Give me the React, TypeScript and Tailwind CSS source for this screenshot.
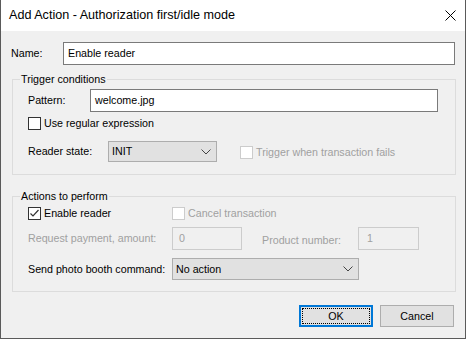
import React from 'react';

const font = { fontFamily: '"Liberation Sans", Arial, sans-serif' };

function Check({ checked, disabled }: { checked?: boolean; disabled?: boolean }) {
  return (
    <div
      className={`w-[13px] h-[13px] shrink-0 border bg-white flex items-center justify-center ${
        disabled ? 'border-[#cccccc]' : 'border-[#333333]'
      }`}
    >
      {checked && (
        <svg width="11" height="11" viewBox="0 0 11 11">
          <polyline points="1.5,5.5 4,8 9.5,2" fill="none" stroke="#333" strokeWidth="1.2" />
        </svg>
      )}
    </div>
  );
}

function Chevron() {
  return (
    <svg width="10" height="6" viewBox="0 0 10 6" className="shrink-0">
      <polyline points="0.5,0.5 5,5 9.5,0.5" fill="none" stroke="#444" strokeWidth="1" />
    </svg>
  );
}

function Combo({ value, w }: { value: string; w: string }) {
  return (
    <div className={`${w} h-full border border-[#adadad] bg-[#e1e1e1] flex items-center pl-[3px] pr-[5px]`}>
      <span className="flex-1 text-black">{value}</span>
      <Chevron />
    </div>
  );
}

function Group({ title, children }: { title: string; children: React.ReactNode }) {
  return (
    <div className="relative ml-[1px] w-[444px] h-[96px] border border-[#dcdcdc] flex flex-col pl-[15px]">
      <span className="absolute -top-[8px] left-[7px] px-[1px] bg-[#f0f0f0] leading-[14px] text-black">{title}</span>
      {children}
    </div>
  );
}

export default function App() {
  return (
    <div
      className="w-[466px] h-[339px] bg-[#f0f0f0] border-x border-b border-[#5a5a5a] flex flex-col text-[10.7px] text-black"
      style={font}
    >
      <div className="h-[31px] bg-white flex items-center pl-[8px] pr-[9px] shrink-0">
        <span className="flex-1 text-[12.6px] text-black">Add Action - Authorization first/idle mode</span>
        <svg width="11" height="11" viewBox="0 0 11 11">
          <line x1="0.5" y1="0.5" x2="10.5" y2="10.5" stroke="#000" strokeWidth="1" />
          <line x1="10.5" y1="0.5" x2="0.5" y2="10.5" stroke="#000" strokeWidth="1" />
        </svg>
      </div>

      <div className="flex flex-col pl-[10px]">
        <div className="mt-[11px] h-[23px] flex items-center">
          <span className="w-[52px]">Name:</span>
          <div className="w-[392px] h-full border border-[#7a7a7a] bg-white flex items-center pl-[4px]">Enable reader</div>
        </div>

        <div className="mt-[14px]">
          <Group title="Trigger conditions">
            <div className="mt-[9px] h-[23px] flex items-center">
              <span className="w-[62px]">Pattern:</span>
              <div className="w-[348px] h-full border border-[#7a7a7a] bg-white flex items-center pl-[4px]">welcome.jpg</div>
            </div>
            <div className="mt-[5px] h-[13px] flex items-center gap-[3px]">
              <Check />
              <span>Use regular expression</span>
            </div>
            <div className="mt-[11px] h-[21px] flex items-center">
              <span className="w-[80px]">Reader state:</span>
              <Combo value="INIT" w="w-[109px]" />
              <div className="ml-[23px] flex items-center gap-[3px] mt-[2px]">
                <Check disabled />
                <span className="text-[#a0a0a0]">Trigger when transaction fails</span>
              </div>
            </div>
          </Group>
        </div>

        <div className="mt-[21px]">
          <Group title="Actions to perform">
            <div className="mt-[10px] h-[13px] flex items-center">
              <div className="w-[144px] flex items-center gap-[3px]">
                <Check checked />
                <span>Enable reader</span>
              </div>
              <div className="flex items-center gap-[3px]">
                <Check disabled />
                <span className="text-[#a0a0a0]">Cancel transaction</span>
              </div>
            </div>
            <div className="mt-[7px] h-[23px] flex items-center text-[#a0a0a0]">
              <span className="w-[144px]">Request payment, amount:</span>
              <div className="w-[70px] h-full border border-[#cccccc] flex items-center pl-[6px]">0</div>
              <span className="ml-[20px] w-[96px] mt-[3px]">Product number:</span>
              <div className="w-[61px] h-full border border-[#cccccc] flex items-center pl-[8px]">1</div>
            </div>
            <div className="mt-[8px] h-[22px] flex items-center">
              <span className="w-[144px]">Send photo booth command:</span>
              <Combo value="No action" w="w-[187px]" />
            </div>
          </Group>
        </div>

        <div className="mt-[13px] h-[22px] flex justify-end gap-[7px] pr-[11px]">
          <button className="w-[74px] h-full border-2 border-[#0078d7] bg-[#e1e1e1] p-[1px]">
            <div className="w-full h-full border border-dotted border-black flex items-center justify-center">OK</div>
          </button>
          <button className="w-[74px] h-full border border-[#adadad] bg-[#e1e1e1] flex items-center justify-center">
            Cancel
          </button>
        </div>
      </div>
    </div>
  );
}
